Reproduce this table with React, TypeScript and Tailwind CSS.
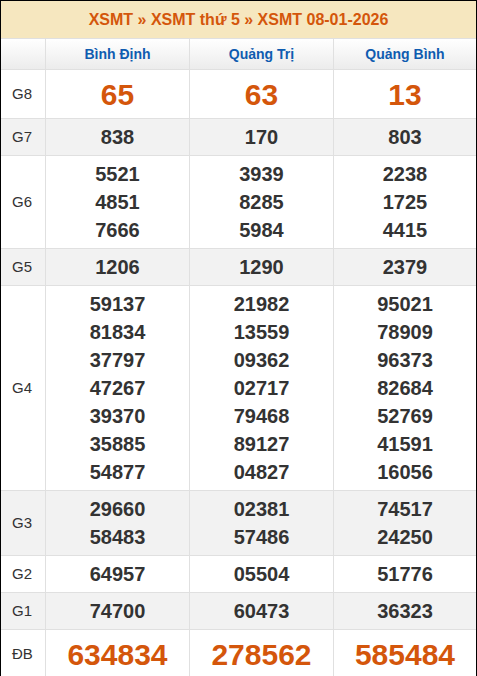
import React from 'react';

type Row = {
  label: string;
  values: string[][];
  big?: boolean;
  gray?: boolean;
};

const provinces = ['Bình Định', 'Quảng Trị', 'Quảng Bình'];

const rows: Row[] = [
  { label: 'G8', values: [['65'], ['63'], ['13']], big: true },
  { label: 'G7', values: [['838'], ['170'], ['803']], gray: true },
  {
    label: 'G6',
    values: [
      ['5521', '4851', '7666'],
      ['3939', '8285', '5984'],
      ['2238', '1725', '4415'],
    ],
  },
  { label: 'G5', values: [['1206'], ['1290'], ['2379']], gray: true },
  {
    label: 'G4',
    values: [
      ['59137', '81834', '37797', '47267', '39370', '35885', '54877'],
      ['21982', '13559', '09362', '02717', '79468', '89127', '04827'],
      ['95021', '78909', '96373', '82684', '52769', '41591', '16056'],
    ],
  },
  {
    label: 'G3',
    values: [
      ['29660', '58483'],
      ['02381', '57486'],
      ['74517', '24250'],
    ],
    gray: true,
  },
  { label: 'G2', values: [['64957'], ['05504'], ['51776']] },
  { label: 'G1', values: [['74700'], ['60473'], ['36323']], gray: true },
  { label: 'ĐB', values: [['634834'], ['278562'], ['585484']], big: true },
];

const App = () => {
  return (
    <div className="w-[477px] h-[676px] bg-white font-[family-name:Liberation_Sans,Arial,sans-serif]">
      <div className="border border-black">
        {/* Title */}
        <div className="h-[37px] bg-[#f6e7bf] flex items-center justify-center text-[16px] font-bold text-[#d4560b]">
          XSMT » XSMT thứ 5 » XSMT 08-01-2026
        </div>

        {/* Province headers */}
        <div className="grid grid-cols-[45px_144px_144px_1fr] h-[31px] bg-gradient-to-b from-white to-[#ececec] border-t border-[#e0e0e0]">
          <div className="border-r border-[#e0e0e0]" />
          {provinces.map((p, i) => (
            <div
              key={p}
              className={`flex items-center justify-center text-[14px] font-bold text-[#0f5cb0] ${
                i < 2 ? 'border-r border-[#e0e0e0]' : ''
              }`}
            >
              {p}
            </div>
          ))}
        </div>

        {/* Prize rows */}
        {rows.map((row) => (
          <div
            key={row.label}
            className={`grid grid-cols-[45px_144px_144px_1fr] border-t border-[#e0e0e0] ${
              row.gray ? 'bg-[#f2f2f2]' : 'bg-white'
            }`}
          >
            <div className="flex items-center pl-[11px] text-[15px] text-[#333] border-r border-[#e0e0e0]">
              {row.label}
            </div>
            {row.values.map((col, i) => (
              <div
                key={i}
                className={`flex flex-col items-center justify-center ${
                  row.big ? 'h-[48px] pt-[2px]' : 'py-[4px]'
                } ${row.label === 'ĐB' ? 'h-[43px]' : ''} ${i < 2 ? 'border-r border-[#e0e0e0]' : ''}`}
              >
                {col.map((v) => (
                  <span
                    key={v}
                    className={
                      row.big
                        ? 'text-[30px] leading-[36px] font-bold text-[#d4560b]'
                        : 'text-[20px] leading-[28px] font-bold text-[#333]'
                    }
                  >
                    {v}
                  </span>
                ))}
              </div>
            ))}
          </div>
        ))}
      </div>
    </div>
  );
};

export default App;
